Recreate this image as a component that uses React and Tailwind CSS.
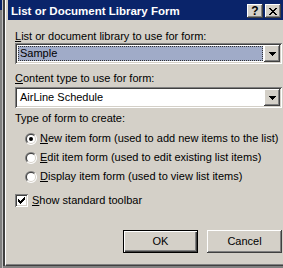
const raised =
  'shadow-[inset_-1px_-1px_#404040,inset_1px_1px_#ffffff,inset_-2px_-2px_#808080,inset_2px_2px_#d4d0c8]';
const sunken =
  'shadow-[inset_1px_1px_#808080,inset_-1px_-1px_#ffffff,inset_2px_2px_#404040,inset_-2px_-2px_#d4d0c8]';

function Pixels({ w, h, cells, className }) {
   return (
      <svg width={w} height={h} className={className} shapeRendering="crispEdges">
         {cells.map(([x, y, cw, ch], i) => (
            <rect key={i} x={x} y={y} width={cw} height={ch} fill="#000" />
         ))}
      </svg>
   );
}

function CaptionButton({ children, className = '' }) {
   return (
      <div
         className={`flex h-[14px] w-[16px] items-center justify-center bg-[#d4d0c8] ${raised} ${className}`}
      >
         {children}
      </div>
   );
}

function Combo({ value, selected }) {
   return (
      <div className={`flex h-[21px] w-full bg-white p-[2px] ${sunken}`}>
         <div className="flex flex-1 p-[1px]">
            {selected ? (
               <div className="flex flex-1 items-center border border-dotted border-[#333] bg-[#a0abc8] pl-[1px]">
                  {value}
               </div>
            ) : (
               <div className="flex flex-1 items-center pl-[2px]">{value}</div>
            )}
         </div>
         <div className={`flex h-[17px] w-[16px] items-center justify-center bg-[#d4d0c8] ${raised}`}>
            <Pixels
               w={7}
               h={4}
               className="mt-[1px]"
               cells={[
                  [0, 0, 7, 1],
                  [1, 1, 5, 1],
                  [2, 2, 3, 1],
                  [3, 3, 1, 1],
               ]}
            />
         </div>
      </div>
   );
}

// half of a ring, split along the 45° diagonal like the old 3D radio
function half(r, bottomRight) {
   const k = r * Math.SQRT1_2;
   return `M${6 - k} ${6 + k} A${r} ${r} 0 0 ${bottomRight ? 0 : 1} ${6 + k} ${6 - k} Z`;
}

function Radio({ checked }) {
   return (
      <svg width="12" height="12" className="shrink-0">
         <path d={half(6, false)} fill="#808080" />
         <path d={half(6, true)} fill="#ffffff" />
         <path d={half(5, false)} fill="#404040" />
         <path d={half(5, true)} fill="#d4d0c8" />
         <circle cx="6" cy="6" r="4" fill="#fff" />
         {checked && <circle cx="6" cy="6" r="2" fill="#000" />}
      </svg>
   );
}

function RadioRow({ mnemonic, rest, checked }) {
   return (
      <div className="flex h-[13px] items-center gap-[3px] pl-[10px]">
         <Radio checked={checked} />
         <span className="whitespace-nowrap">
            <u>{mnemonic}</u>
            {rest}
         </span>
      </div>
   );
}

function Checkbox() {
   return (
      <div className={`h-[13px] w-[13px] shrink-0 bg-white p-[3px] ${sunken}`}>
         <Pixels
            w={7}
            h={7}
            cells={[
               [0, 2, 1, 3],
               [1, 3, 1, 3],
               [2, 4, 1, 3],
               [3, 3, 1, 3],
               [4, 2, 1, 3],
               [5, 1, 1, 3],
               [6, 0, 1, 3],
            ]}
         />
      </div>
   );
}

export default function App() {
   return (
      <div className="flex h-[268px] w-[283px] overflow-hidden bg-[#808080] font-['Liberation_Sans',Arial,sans-serif] text-[11px] leading-[13px] text-black">
         <div className="w-[3px] border-r border-[#c0c0c0]">
            <div className="h-[10px] w-[2px] bg-[#0a246a]" />
         </div>
         <div className="h-[266px] w-[2px] bg-[#404040]" />
         <div className="flex h-[266px] flex-1 flex-col border-b border-l border-b-[#404040] border-l-white bg-[#d4d0c8]">
            <div className="flex flex-1 flex-col border-b border-[#808080] pl-[2px]">
               <div className="flex h-[20px] items-center bg-[#0a246a] pl-[3px] pr-[2px] pt-[2px]">
                  <span className="flex-1 text-[11.5px] font-bold text-white">
                     List or Document Library Form
                  </span>
                  <CaptionButton>
                     <span className="text-[12px] font-bold leading-[12px]">?</span>
                  </CaptionButton>
                  <CaptionButton className="ml-[2px]">
                     <Pixels
                        w={8}
                        h={7}
                        cells={[
                           [0, 0, 2, 1],
                           [6, 0, 2, 1],
                           [1, 1, 2, 1],
                           [5, 1, 2, 1],
                           [2, 2, 4, 1],
                           [3, 3, 2, 1],
                           [2, 4, 4, 1],
                           [1, 5, 2, 1],
                           [5, 5, 2, 1],
                           [0, 6, 2, 1],
                           [6, 6, 2, 1],
                        ]}
                     />
                  </CaptionButton>
               </div>

               <div className="flex flex-col pl-[7px] pr-[1px]">
                  <p className="mt-[10px] h-[13px] whitespace-nowrap">
                     <u>L</u>ist or document library to use for form:
                  </p>
                  <Combo value="Sample" selected />

                  <p className="mt-[8px] h-[13px] whitespace-nowrap">
                     <u>C</u>ontent type to use for form:
                  </p>
                  <div className="mt-[2px]">
                     <Combo value="AirLine Schedule" />
                  </div>

                  <p className="mt-[4px] h-[13px]">Type of form to create:</p>
                  <div className="mt-[7px] flex flex-col gap-[6px]">
                     <RadioRow
                        checked
                        mnemonic="N"
                        rest="ew item form (used to add new items to the list)"
                     />
                     <RadioRow mnemonic="E" rest="dit item form (used to edit existing list items)" />
                     <RadioRow mnemonic="D" rest="isplay item form (used to view list items)" />
                  </div>

                  <div className="mt-[11px] flex h-[13px] items-center gap-[4px]">
                     <Checkbox />
                     <span>
                        <u>S</u>how standard toolbar
                     </span>
                  </div>

                  <div className="mt-[23px] flex justify-end gap-[9px]">
                     <button className="h-[23px] w-[75px] border border-black bg-[#d4d0c8] shadow-[inset_1px_1px_#ffffff,inset_-1px_-1px_#404040,inset_-2px_-2px_#808080]">
                        OK
                     </button>
                     <button className={`h-[23px] w-[75px] bg-[#d4d0c8] ${raised}`}>Cancel</button>
                  </div>
               </div>
            </div>
         </div>
      </div>
   );
}
